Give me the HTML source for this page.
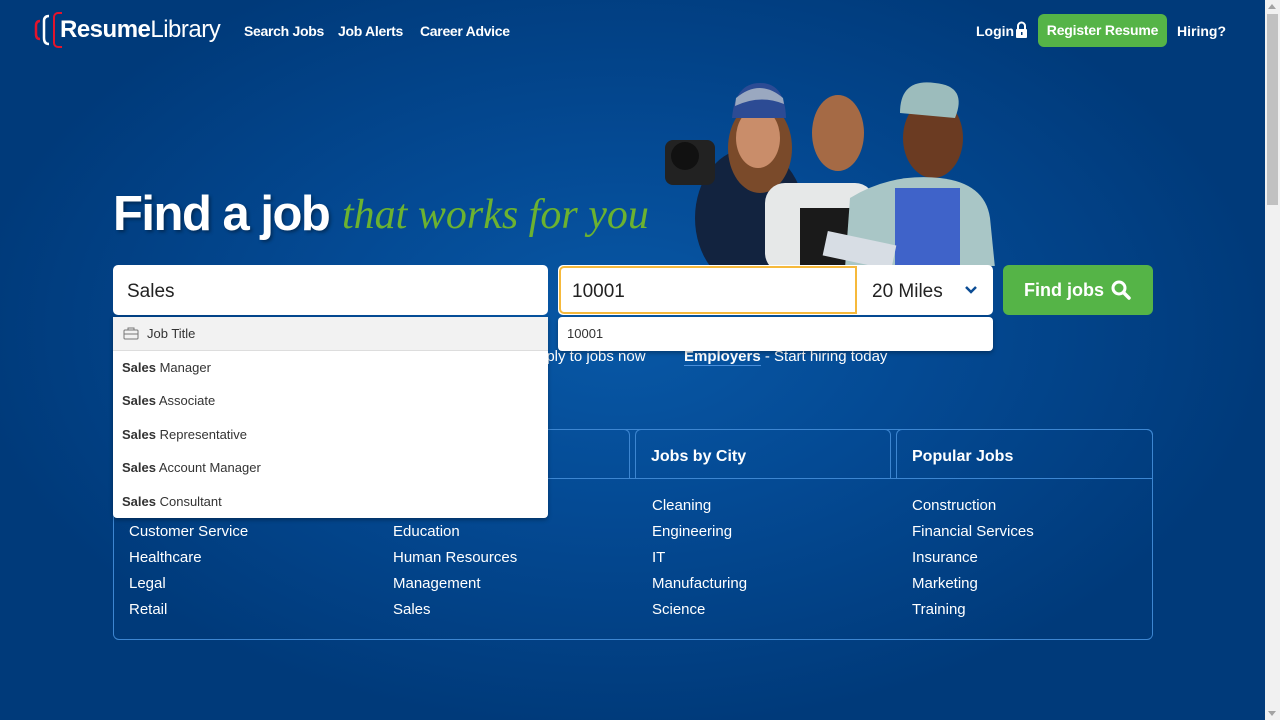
<!DOCTYPE html>
<html><head><meta charset="utf-8">
<style>
*{margin:0;padding:0;box-sizing:border-box}
body{width:1280px;height:720px;overflow:hidden;font-family:"Liberation Sans",sans-serif;background:#003a7a;position:relative}
.bg{position:absolute;left:0;top:0;width:1265px;height:720px;background:radial-gradient(ellipse 650px 400px at 620px 330px,#0858a6 0%,#044a94 45%,#003a7a 100%)}
.sb{position:absolute;right:0;top:0;width:15px;height:720px;background:#f1f1f1}
.sb .th{position:absolute;left:2px;top:14px;width:11px;height:191px;background:#c1c1c1}
.sb .up{position:absolute;left:3px;top:4px;border:4px solid transparent;border-bottom:5px solid #a3a3a3;border-top:0}
.sb .dn{position:absolute;left:3px;bottom:4px;border:4px solid transparent;border-top:5px solid #a3a3a3;border-bottom:0}
.a{position:absolute;color:#fff;white-space:nowrap}
.nav{font-size:14px;font-weight:bold;top:23px}
.in{position:absolute;background:#fff;border-radius:5px}
.dd{position:absolute;background:#fff;border-radius:0 0 4px 4px;box-shadow:0 2px 4px rgba(0,0,0,.3)}
.dd div{font-size:13px;color:#333;padding-left:9px;height:33.5px;line-height:33.5px}
.box{position:absolute;left:113px;top:429px;width:1040px;height:211px;border:1px solid #3d86d1;border-radius:6px}
.tab{position:absolute;top:429px;height:50px;border:1px solid #3d86d1;border-bottom:none;border-radius:6px 6px 0 0;color:#fff;font-weight:bold;font-size:16px;padding:18px 0 0 15px}
.col{position:absolute;color:#fff;font-size:15px;line-height:26px}
</style></head><body>
<div class="bg"></div>
<svg class="a" style="left:32px;top:12px" width="30" height="36"><path d="M8 9 Q4 9 4 14 V22 Q4 27 8 27" stroke="#e3142c" stroke-width="2.5" fill="none"/><path d="M17 4 Q12 4 12 9 V26 Q12 32 17 32" stroke="#fff" stroke-width="2.5" fill="none"/><rect x="22" y="1" width="30" height="34" rx="4" stroke="#e3142c" stroke-width="2" fill="none"/></svg>
<div class="a" style="left:60px;top:16px;font-size:24px;letter-spacing:-0.5px"><b>Resume</b><span style="font-weight:normal">Library</span></div>
<div class="a nav" style="left:244px;letter-spacing:-0.3px">Search Jobs</div>
<div class="a nav" style="left:338px;letter-spacing:-0.3px">Job Alerts</div>
<div class="a nav" style="left:420px;letter-spacing:-0.3px">Career Advice</div>
<div class="a nav" style="left:976px">Login</div>
<svg class="a" style="left:1015px;top:21px" width="13" height="17"><path d="M3 8 V5 A3.5 3.5 0 0 1 10 5 V8" stroke="#fff" stroke-width="2" fill="none"/><rect x="1" y="8" width="11" height="9" rx="1" fill="#fff"/><rect x="6" y="11" width="1.5" height="3" fill="#003a7a"/></svg>
<div class="a" style="left:1038px;top:14px;width:129px;height:33px;background:#55b447;border-radius:6px;font-size:14px;font-weight:bold;text-align:center;line-height:33px;letter-spacing:-0.2px">Register Resume</div>
<div class="a nav" style="left:1177px">Hiring?</div>
<svg class="a" style="left:650px;top:78px" width="350" height="188">
<ellipse cx="100" cy="140" rx="55" ry="70" fill="#12233f"/>
<ellipse cx="110" cy="70" rx="32" ry="45" fill="#7a4a2a"/>
<ellipse cx="108" cy="60" rx="22" ry="30" fill="#c98d6a"/>
<path d="M82 40 Q85 5 110 5 Q135 5 136 40 Z" fill="#2c4b94"/><path d="M86 20 Q110 0 133 20 L134 26 Q110 16 85 28Z" fill="#9aa8c0"/>
<rect x="15" y="62" width="50" height="45" rx="8" fill="#222"/><circle cx="35" cy="78" r="14" fill="#111"/>
<rect x="115" y="105" width="110" height="90" rx="20" fill="#e6e8e8"/><rect x="150" y="130" width="50" height="60" fill="#1a1a1a"/>
<ellipse cx="188" cy="55" rx="26" ry="38" fill="#a56a45"/>
<ellipse cx="283" cy="60" rx="30" ry="40" fill="#6b3b22"/>
<path d="M250 35 Q250 0 285 5 Q318 8 305 40 Z" fill="#9cbcbc"/>
<path d="M200 120 Q240 95 290 100 Q335 105 340 140 L345 190 L195 190Z" fill="#a9c6c6"/>
<rect x="245" y="110" width="65" height="80" fill="#3f63c9"/>
<rect x="175" y="160" width="70" height="25" fill="#d7dde4" transform="rotate(12 210 170)"/>
</svg>
<div class="a" style="left:113px;top:186px;font-size:49px;font-weight:bold;letter-spacing:-1.5px;text-shadow:2px 2px 3px rgba(0,0,0,.35)">Find a job</div>
<div class="a" style="left:342px;top:191px;font-size:42px;color:#6cb230;font-style:italic;font-family:'Liberation Serif',serif">that works for you</div>
<div class="in" style="left:113px;top:265px;width:435px;height:50px"></div>
<div class="a" style="left:127px;top:281px;font-size:19px;color:#222">Sales</div>
<div class="in" style="left:558px;top:265px;width:435px;height:50px"></div>
<div style="position:absolute;left:559px;top:266px;width:298px;height:48px;border:2px solid #f6b93b;border-radius:5px 0 0 5px"></div>
<div class="a" style="left:572px;top:281px;font-size:19px;color:#222">10001</div>
<div class="a" style="left:872px;top:281px;font-size:19px;color:#222">20 Miles</div>
<svg class="a" style="left:964px;top:285px" width="14" height="10"><path d="M2 2 L7 7 L12 2" stroke="#0b4c94" stroke-width="2.5" fill="none"/></svg>
<div class="a" style="left:1003px;top:265px;width:150px;height:50px;background:#55b447;border-radius:6px;font-size:18px;font-weight:bold;padding:15px 0 0 21px">Find jobs</div>
<svg class="a" style="left:1111px;top:280px" width="20" height="20"><circle cx="8" cy="8" r="6" stroke="#fff" stroke-width="3" fill="none"/><path d="M12.5 12.5 L18 18" stroke="#fff" stroke-width="3.5" stroke-linecap="round"/></svg>
<div class="a" style="left:538px;top:348px;font-size:15px">pply to jobs now</div>
<div class="a" style="left:684px;top:348px;font-size:15px"><b style="border-bottom:1px solid #4a8fdb">Employers</b> - Start hiring today</div>
<div class="box"></div>
<div style="position:absolute;left:113px;top:478px;width:1040px;border-top:1px solid #3d86d1"></div>
<div class="tab" style="left:113px;width:517px"></div>
<div class="tab" style="left:635px;width:256px">Jobs by City</div>
<div class="tab" style="left:896px;width:257px">Popular Jobs</div>
<div class="col" style="left:129px;top:519px">Customer Service<br>Healthcare<br>Legal<br>Retail</div>
<div class="col" style="left:393px;top:519px">Education<br>Human Resources<br>Management<br>Sales</div>
<div class="col" style="left:652px;top:493px">Cleaning<br>Engineering<br>IT<br>Manufacturing<br>Science</div>
<div class="col" style="left:912px;top:493px">Construction<br>Financial Services<br>Insurance<br>Marketing<br>Training</div>
<div class="dd" style="left:113px;top:317px;width:435px;height:201px">
<div style="background:#f2f2f2;border-bottom:1px solid #ddd;padding-left:34px;position:relative">Job Title<svg style="position:absolute;left:10px;top:10px" width="16" height="13"><rect x="1" y="3" width="14" height="9" rx="1" stroke="#777" fill="none"/><path d="M5 3 V1 H11 V3 M1 7 H15" stroke="#777" fill="none"/></svg></div>
<div><b>Sales</b> Manager</div><div><b>Sales</b> Associate</div><div><b>Sales</b> Representative</div><div><b>Sales</b> Account Manager</div><div><b>Sales</b> Consultant</div>
</div>
<div class="dd" style="left:558px;top:317px;width:435px;height:34px;border-radius:4px"><div style="font-size:13px">10001</div></div>
<div class="sb"><div class="up"></div><div class="th"></div><div class="dn"></div></div>
</body></html>
